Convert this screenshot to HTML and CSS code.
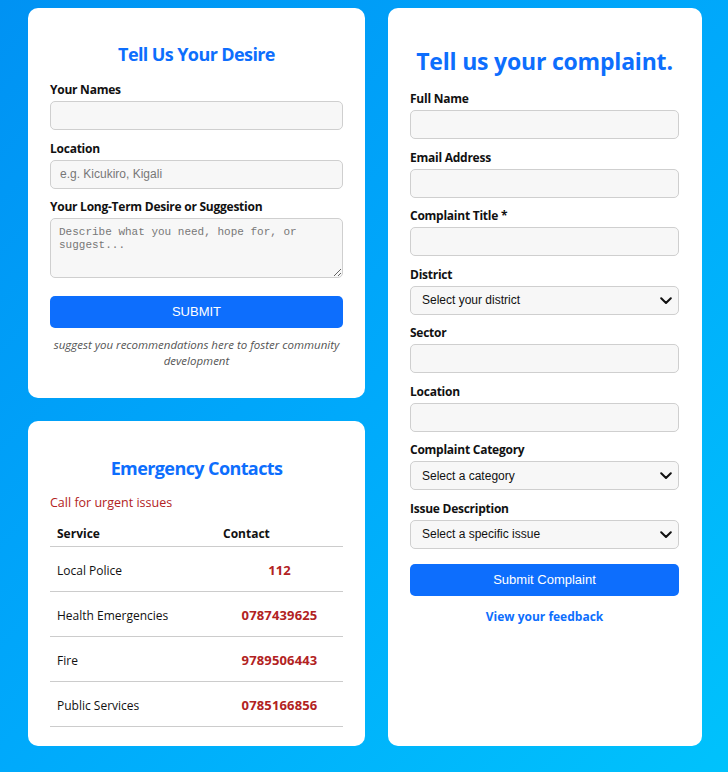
FILE: index.html
```html
<!DOCTYPE html>
<html lang="en">
<head>
<meta charset="utf-8">
<title>Community Desire and Complaints</title>
<link rel="stylesheet" href="styles.css">
</head>
<body>
<div class="page">
  <div class="left-col">
    <section class="card desire">
      <h2 class="card-title">Tell Us Your Desire</h2>
      <div class="group">
        <label class="lbl">Your Names</label>
        <input class="field" type="text">
      </div>
      <div class="group">
        <label class="lbl">Location</label>
        <input class="field" type="text" placeholder="e.g. Kicukiro, Kigali">
      </div>
      <div class="group">
        <label class="lbl">Your Long-Term Desire or Suggestion</label>
        <textarea class="area" placeholder="Describe what you need, hope for, or suggest..."></textarea>
      </div>
      <button class="btn btn-upper">SUBMIT</button>
      <p class="note">suggest you recommendations here to foster community development</p>
    </section>

    <section class="card emergency">
      <h2 class="card-title em-title">Emergency Contacts</h2>
      <p class="urgent">Call for urgent issues</p>
      <table class="contacts">
        <thead>
          <tr><th class="c1">Service</th><th class="c2">Contact</th></tr>
        </thead>
        <tbody>
          <tr><td class="c1">Local Police</td><td class="num">112</td></tr>
          <tr><td class="c1">Health Emergencies</td><td class="num">0787439625</td></tr>
          <tr><td class="c1">Fire</td><td class="num">9789506443</td></tr>
          <tr><td class="c1">Public Services</td><td class="num">0785166856</td></tr>
        </tbody>
      </table>
    </section>
  </div>

  <section class="card complaint">
    <h2 class="big-title">Tell us your complaint.</h2>
    <div class="group">
      <label class="lbl">Full Name</label>
      <input class="field" type="text">
    </div>
    <div class="group">
      <label class="lbl">Email Address</label>
      <input class="field" type="text">
    </div>
    <div class="group">
      <label class="lbl">Complaint Title *</label>
      <input class="field" type="text">
    </div>
    <div class="group">
      <label class="lbl">District</label>
      <div class="select-wrap">
        <select class="field sel"><option>Select your district</option></select>
        <svg class="chev" viewBox="0 0 12 8" width="12" height="8"><path d="M1.2 1.2 L6 6 L10.8 1.2" fill="none" stroke="#111" stroke-width="2" stroke-linecap="round" stroke-linejoin="round"/></svg>
      </div>
    </div>
    <div class="group">
      <label class="lbl">Sector</label>
      <input class="field" type="text">
    </div>
    <div class="group">
      <label class="lbl">Location</label>
      <input class="field" type="text">
    </div>
    <div class="group">
      <label class="lbl">Complaint Category</label>
      <div class="select-wrap">
        <select class="field sel"><option>Select a category</option></select>
        <svg class="chev" viewBox="0 0 12 8" width="12" height="8"><path d="M1.2 1.2 L6 6 L10.8 1.2" fill="none" stroke="#111" stroke-width="2" stroke-linecap="round" stroke-linejoin="round"/></svg>
      </div>
    </div>
    <div class="group">
      <label class="lbl">Issue Description</label>
      <div class="select-wrap">
        <select class="field sel"><option>Select a specific issue</option></select>
        <svg class="chev" viewBox="0 0 12 8" width="12" height="8"><path d="M1.2 1.2 L6 6 L10.8 1.2" fill="none" stroke="#111" stroke-width="2" stroke-linecap="round" stroke-linejoin="round"/></svg>
      </div>
    </div>
    <button class="btn btn-complaint">Submit Complaint</button>
    <a class="feedback" href="#">View your feedback</a>
  </section>
</div>
</body>
</html>
```

FILE: styles.css
```css
* { box-sizing: border-box; }

html, body {
  margin: 0;
  padding: 0;
  min-height: 100%;
}

body {
  background: linear-gradient(135deg, #0092f3 0%, #00a9fb 50%, #00c2fc 100%);
  min-height: 772px;
  font-family: "Open Sans", "Noto Sans", sans-serif;
  color: #111;
}

.page {
  display: flex;
  gap: 23px;
  padding: 8px 0 0 28px;
  align-items: flex-start;
}

.left-col {
  width: 337px;
  display: flex;
  flex-direction: column;
  gap: 23px;
}

.card {
  background: #fff;
  border-radius: 10px;
  padding: 22px;
}

.desire { height: 390px; }
.emergency { height: 325px; padding-bottom: 20px; }
.complaint { width: 314px; height: 738px; padding: 22px 23px 22px 22px; }

.card-title {
  margin: 12px 0 14px;
  text-align: center;
  font-size: 18px;
  line-height: 25px;
  font-weight: 700;
  color: #0d6efd;
  letter-spacing: -0.6px;
}

.em-title { margin: 13px 0 13px; }

.big-title {
  margin: 15px 0 13px;
  text-align: center;
  font-size: 23px;
  line-height: 32px;
  font-weight: 700;
  color: #0d6efd;
  letter-spacing: -0.2px;
}

.group { margin-bottom: 9.5px; }

.lbl {
  display: block;
  font-size: 12px;
  line-height: 17px;
  font-weight: 700;
  margin-bottom: 3px;
  color: #111;
  letter-spacing: -0.25px;
}

.field {
  display: block;
  width: 100%;
  height: 29px;
  border: 1px solid #cfcfcf;
  border-radius: 5px;
  background: #f7f7f7;
  padding: 0 9px;
  font-family: "Liberation Sans", Arial, sans-serif;
  font-size: 12px;
  color: #111;
  outline: none;
}

.field::placeholder { color: #777; }

.area {
  display: block;
  width: 100%;
  height: 60px;
  border: 1px solid #cfcfcf;
  border-radius: 5px;
  background: #f7f7f7;
  padding: 7px 8px;
  font-family: "Liberation Mono", "DejaVu Sans Mono", monospace;
  font-size: 11px;
  line-height: 13px;
  resize: vertical;
  outline: none;
}

.area::placeholder { color: #777; }

.select-wrap { position: relative; }

.sel {
  appearance: none;
  -webkit-appearance: none;
  padding-left: 11px;
  cursor: pointer;
}

.chev {
  position: absolute;
  right: 7px;
  top: 11px;
  pointer-events: none;
}

.btn {
  display: block;
  width: 100%;
  height: 32px;
  border: 0;
  border-radius: 5px;
  background: #0d6efd;
  color: #fff;
  font-family: "Liberation Sans", Arial, sans-serif;
  font-size: 13px;
}

.btn-upper { margin-top: 17.5px; }
.btn-complaint { margin-top: 15px; }

.note {
  margin: 9px 0 0;
  text-align: center;
  font-style: italic;
  font-size: 11.5px;
  line-height: 16px;
  color: #555;
}

.feedback {
  display: block;
  margin-top: 12px;
  text-align: center;
  font-size: 12px;
  line-height: 17px;
  font-weight: 700;
  color: #0d6efd;
  text-decoration: none;
}

.urgent {
  margin: 1.5px 0 9.5px;
  font-size: 12.5px;
  line-height: 17px;
  color: #b22222;
}

.contacts {
  width: 100%;
  border-collapse: collapse;
  font-size: 12px;
}

.contacts th {
  text-align: left;
  font-weight: 700;
  height: 26px;
  padding: 0 7px 0;
  border-bottom: 1px solid #ccc;
}

.contacts td {
  height: 45px;
  padding: 2px 7px 0;
  border-bottom: 1px solid #ccc;
}

.contacts .c1 { width: 166px; }

.num {
  text-align: center;
  font-weight: 700;
  color: #b22222;
  font-size: 13px;
  letter-spacing: 0.15px;
}
```
